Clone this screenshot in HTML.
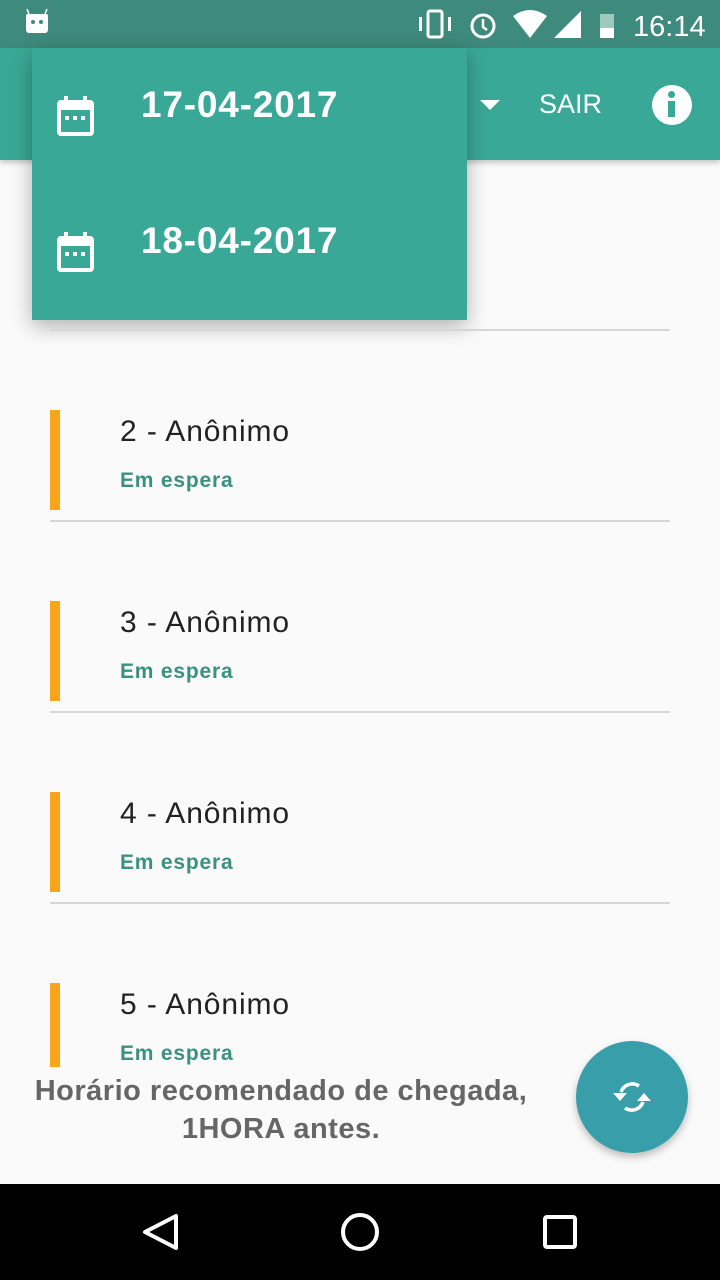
<!DOCTYPE html><html><head><style>
body{margin:0;width:720px;height:1280px;background:#fafafa;position:relative;overflow:hidden;font-family:"Liberation Sans",sans-serif}
.a{position:absolute}
.bar{position:absolute;left:50px;width:10px;height:100px;background:#f9a51a}
.div{position:absolute;left:50px;width:620px;height:2px;background:#d6d6d6}
.nm{position:absolute;left:120px;font-size:30px;letter-spacing:0.9px;color:#222}
.st{position:absolute;left:120px;font-size:21px;letter-spacing:0.8px;font-weight:bold;color:#3a917f}
</style></head><body>
<div class="a" style="left:0;top:0;width:720px;height:48px;background:#3e8a7c"></div>
<div class="a" style="left:0;top:48px;width:720px;height:112px;background:#3aa896;box-shadow:0 3px 5px rgba(0,0,0,.2)"></div>
<svg class="a" style="left:24px;top:8px" width="26" height="28" viewBox="0 0 26 28"><path d="M4 6h18a2 2 0 0 1 2 2v14a3 3 0 0 1-3 3H5a3 3 0 0 1-3-3V8a2 2 0 0 1 2-2z" fill="#fff"/><path d="M5 6 3 1M21 6l2-5" stroke="#fff" stroke-width="1.5"/><circle cx="9" cy="14" r="2" fill="#3e8a7c"/><circle cx="17" cy="14" r="2" fill="#3e8a7c"/></svg>
<svg class="a" style="left:416px;top:8px" width="290" height="32"><rect x="12" y="3" width="14" height="26" rx="2" fill="none" stroke="#fff" stroke-width="3"/><rect x="3" y="9" width="3" height="14" fill="#fff"/><rect x="32" y="9" width="3" height="14" fill="#fff"/><circle cx="67" cy="18" r="11" fill="none" stroke="#fff" stroke-width="3"/><path d="M67 11v8l4 3" stroke="#fff" stroke-width="2.5" fill="none"/><path d="M97 8q17-12 34 0l-17 22z" fill="#fff"/><path d="M138 30 165 3v27z" fill="#fff"/><rect x="184" y="6" width="14" height="24" fill="#9fc9bf"/><path d="M184 20h14v10h-14z" fill="#fff"/><text x="217" y="28" font-size="29" fill="#fff" font-family="Liberation Sans">16:14</text></svg>
<div class="a" style="left:480px;top:100px;width:0;height:0;border-left:10px solid transparent;border-right:10px solid transparent;border-top:10px solid #fff"></div>
<div class="a" style="left:539px;top:89px;font-size:27px;color:#fff">SAIR</div>
<div class="a" style="left:652px;top:85px;width:40px;height:40px;border-radius:50%;background:#fff"></div>
<div class="a" style="left:668px;top:91px;width:7px;height:7px;border-radius:50%;background:#3aa896"></div>
<div class="a" style="left:668px;top:101px;width:7px;height:16px;background:#3aa896"></div>
<div class="a" style="left:32px;top:48px;width:435px;height:272px;background:#3aa896;box-shadow:0 6px 20px rgba(0,0,0,.3)"></div>
<svg class="a" style="left:57px;top:96px" width="38" height="42"><rect x="2" y="6" width="33" height="32" rx="2" fill="none" stroke="#fff" stroke-width="4"/><rect x="2" y="6" width="33" height="8" fill="#fff"/><rect x="7" y="0" width="4" height="8" fill="#fff"/><rect x="26" y="0" width="4" height="8" fill="#fff"/><rect x="8" y="20" width="4" height="4" fill="#fff"/><rect x="16" y="20" width="4" height="4" fill="#fff"/><rect x="24" y="20" width="4" height="4" fill="#fff"/></svg>
<svg class="a" style="left:57px;top:232px" width="38" height="42"><rect x="2" y="6" width="33" height="32" rx="2" fill="none" stroke="#fff" stroke-width="4"/><rect x="2" y="6" width="33" height="8" fill="#fff"/><rect x="7" y="0" width="4" height="8" fill="#fff"/><rect x="26" y="0" width="4" height="8" fill="#fff"/><rect x="8" y="20" width="4" height="4" fill="#fff"/><rect x="16" y="20" width="4" height="4" fill="#fff"/><rect x="24" y="20" width="4" height="4" fill="#fff"/></svg>
<div class="a" style="left:141px;top:84px;font-size:37px;letter-spacing:0.8px;font-weight:bold;color:#fff">17-04-2017</div>
<div class="a" style="left:141px;top:220px;font-size:37px;letter-spacing:0.8px;font-weight:bold;color:#fff">18-04-2017</div>
<div class="div" style="top:329px"></div>
<div class="bar" style="top:410px"></div><div class="nm" style="top:415px">2 - Anônimo</div><div class="st" style="top:469px">Em espera</div><div class="div" style="top:520px"></div>
<div class="bar" style="top:601px"></div><div class="nm" style="top:606px">3 - Anônimo</div><div class="st" style="top:660px">Em espera</div><div class="div" style="top:711px"></div>
<div class="bar" style="top:792px"></div><div class="nm" style="top:797px">4 - Anônimo</div><div class="st" style="top:851px">Em espera</div><div class="div" style="top:902px"></div>
<div class="bar" style="top:983px;height:84px"></div><div class="nm" style="top:988px">5 - Anônimo</div><div class="st" style="top:1042px">Em espera</div>
<div class="a" style="left:0;top:1072px;width:562px;text-align:center;font-size:29px;letter-spacing:0.5px;font-weight:bold;color:#666;line-height:38px">Horário recomendado de chegada,<br>1HORA antes.</div>
<div class="a" style="left:576px;top:1041px;width:112px;height:112px;border-radius:50%;background:#389faa;box-shadow:0 4px 8px rgba(0,0,0,.25)"></div>
<svg class="a" style="left:610px;top:1075px" width="44" height="44" viewBox="0 0 44 44"><path d="M29 11A12 12 0 0 0 11 17" stroke="#fff" stroke-width="3.5" fill="none"/><path d="M15 33A12 12 0 0 0 33 27" stroke="#fff" stroke-width="3.5" fill="none"/><path d="M3 18h14l-7 8z" fill="#fff"/><path d="M27 26h14l-7-8z" fill="#fff"/></svg>
<div class="a" style="left:0;top:1184px;width:720px;height:96px;background:#000"></div>
<svg class="a" style="left:0;top:1184px" width="720" height="96"><path d="M176 32v32l-31-16z" fill="none" stroke="#fff" stroke-width="4" stroke-linejoin="round"/><circle cx="360" cy="48" r="17" fill="none" stroke="#fff" stroke-width="4"/><rect x="545" y="33" width="30" height="30" rx="2" fill="none" stroke="#fff" stroke-width="4"/></svg>
</body></html>
